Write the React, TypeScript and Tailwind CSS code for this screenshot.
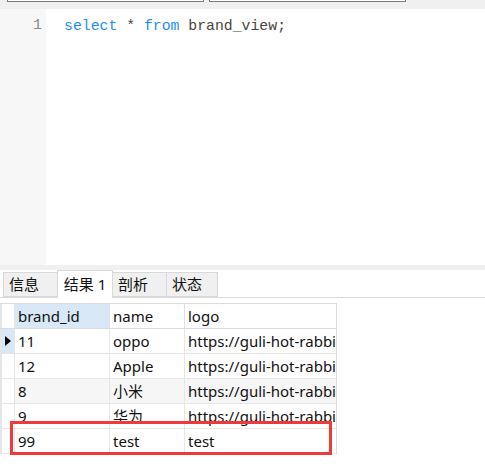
const rows = [
  { id: "11", name: "oppo", logo: "https://guli-hot-rabbit-ssm.oss-cn-beijing.aliyuncs.com", active: true },
  { id: "12", name: "Apple", logo: "https://guli-hot-rabbit-ssm.oss-cn-beijing.aliyuncs.com" },
  { id: "8", name: "小米", logo: "https://guli-hot-rabbit-ssm.oss-cn-beijing.aliyuncs.com", alt: true },
  { id: "9", name: "华为", logo: "https://guli-hot-rabbit-ssm.oss-cn-beijing.aliyuncs.com" },
  { id: "99", name: "test", logo: "test" },
];

const tabs = ["信息", "结果 1", "剖析", "状态"];

export default function App() {
  return (
    <div className="w-[485px] h-[476px] bg-white overflow-hidden flex flex-col font-['Noto_Sans','Noto_Sans_CJK_SC',sans-serif] text-[15px] text-[#111]">
      {/* toolbar remnant */}
      <div className="h-[9px] bg-[#f0f0f0] flex gap-[5px] pl-[7px] shrink-0">
        <div className="w-[197px] h-[2px] bg-white border-x border-b border-[#7a7a7a]" />
        <div className="w-[197px] h-[2px] bg-white border-x border-b border-[#7a7a7a]" />
      </div>

      {/* editor */}
      <div className="h-[256px] flex shrink-0">
        <div className="w-[46px] bg-[#f7f7f7] text-right pr-[4px] pt-[7px] font-['Liberation_Mono',monospace] text-[15px] leading-[20px] text-[#8a8a8a]">
          1
        </div>
        <div className="pl-[18px] pt-[7px] font-['Liberation_Mono',monospace] text-[14.8px] leading-[20px] text-[#4a4540] whitespace-pre">
          <span className="text-[#1e8ff0]">select</span> * <span className="text-[#1e8ff0]">from</span> brand_view;
        </div>
      </div>

      <div className="h-[5px] bg-[#f0f0f0] shrink-0" />

      {/* tabs */}
      <div className="h-[28px] flex items-end pl-[3px] border-b border-[#d9d9d9] shrink-0">
        {tabs.map((t, i) =>
          i === 1 ? (
            <div key={t} className="h-[28px] w-[56px] -mb-px bg-white border border-b-0 border-[#d9d9d9] flex items-center justify-center text-[15px]">
              {t}
            </div>
          ) : (
            <div
              key={t}
              className={`h-[25px] bg-[#f0f0f0] border border-[#d9d9d9] flex items-center pl-[5px] text-[15px] ${i === 0 ? "w-[54px] border-r-0" : i === 2 ? "w-[54px] border-l-0" : "w-[51px] border-l-0"}`}
            >
              {t}
            </div>
          )
        )}
      </div>

      {/* result grid */}
      <div className="pt-[5px] pl-[0px]">
        <div className="w-[337px] border-t border-r border-[#dcdcdc] relative">
          <div className="flex h-[25px] border-b border-[#dcdcdc]">
            <div className="w-[15px] border-l-2 border-r border-[#e6e6e6]" />
            <div className="w-[95px] bg-[#d9e8f6] border-r border-[#e0e0e0] pl-[3px] leading-[24px]">brand_id</div>
            <div className="w-[75px] border-r border-[#e0e0e0] pl-[3px] leading-[24px]">name</div>
            <div className="flex-1 pl-[3px] leading-[24px]">logo</div>
          </div>
          {rows.map((r) => (
            <div key={r.id} className={`flex h-[25px] border-b border-[#e6e6e6] ${r.alt ? "bg-[#f6f6f6]" : "bg-white"}`}>
              <div className={`w-[15px] border-l-2 border-r border-[#e6e6e6] flex items-center justify-center ${r.active ? "bg-[#d9e8f6]" : "bg-white"}`}>
                {r.active && (
                  <svg width="6" height="10" viewBox="0 0 6 10">
                    <path d="M0 0 L6 5 L0 10 Z" fill="#000" />
                  </svg>
                )}
              </div>
              <div className="w-[95px] border-r border-[#e6e6e6] pl-[3px] leading-[24px]">{r.id}</div>
              <div className="w-[75px] border-r border-[#e6e6e6] pl-[3px] leading-[24px]">{r.name}</div>
              <div className="flex-1 pl-[3px] leading-[24px] overflow-hidden whitespace-nowrap">{r.logo}</div>
            </div>
          ))}
          <div className="absolute left-[10px] top-[117px] w-[322px] h-[34px] border-[3px] border-[#ee3a3a]" />
        </div>
      </div>
    </div>
  );
}
